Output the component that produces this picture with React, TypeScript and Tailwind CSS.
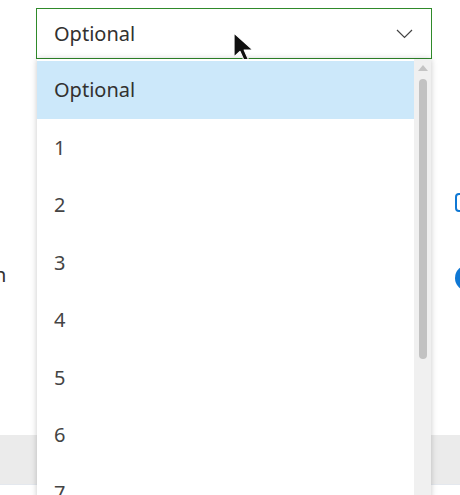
import React from "react";

const items = ["Optional", "1", "2", "3", "4", "5", "6", "7"];

function Chevron() {
  return (
    <svg width="17" height="10" viewBox="0 0 17 10" className="text-[#444]">
      <path d="M1 1l7.5 7.5L16 1" fill="none" stroke="currentColor" strokeWidth="1.2" />
    </svg>
  );
}

function Cursor() {
  return (
    <svg
      width="26"
      height="32"
      viewBox="0 0 26 32"
      className="pointer-events-none absolute left-[195px] top-[23px]"
    >
      <path
        d="M2 1v24l6-5.5 4.5 10 4-1.8-4.3-9.7H21z"
        fill="#111"
        stroke="#fff"
        strokeWidth="1.2"
        strokeLinejoin="round"
      />
    </svg>
  );
}

function DropdownList() {
  return (
    <div className="absolute left-0 top-full mt-px flex h-[440px] w-full bg-white shadow-[0_0_6px_rgba(0,0,0,0.22)]">
      <div className="flex flex-1 flex-col pt-[2px]">
        {items.map((item, i) => (
          <div
            key={item}
            className={
              i === 0
                ? "flex h-[57.5px] shrink-0 items-center bg-[#cce8fa] pl-[17px] pt-px text-[20px] text-[#323130]"
                : "flex h-[57.5px] shrink-0 items-center pl-[17px] pt-px text-[20px] text-[#444]"
            }
          >
            {item}
          </div>
        ))}
      </div>
      <div className="flex w-[17px] flex-col items-center bg-[#f0f0f0] pt-[5px]">
        <svg width="10" height="7" viewBox="0 0 10 7">
          <path d="M0 7L5 1l5 6z" fill="#c4c4c4" />
        </svg>
        <div className="mt-[8px] h-[280px] w-[8px] rounded-full bg-[#c2c2c2]" />
      </div>
    </div>
  );
}

export default function App() {
  return (
    <div className="flex h-[495px] w-[460px] flex-col overflow-hidden bg-white font-['Noto_Sans','Open_Sans',sans-serif]">
      <div className="grid h-[435px] shrink-0 grid-cols-[36px_396px_1fr]">
        <div className="overflow-hidden pt-[265px]">
          <span className="-ml-[6px] block text-[20px] leading-none text-[#323130]">n</span>
        </div>
        <div className="pt-[8px]">
          <div className="relative z-10 flex h-[51px] items-center justify-between border border-[#2f8a2a] bg-white pl-[17px] pr-[18px]">
            <span className="pt-px text-[20px] text-[#323130]">Optional</span>
            <Chevron />
            <Cursor />
            <DropdownList />
          </div>
        </div>
        <div className="flex flex-col gap-[53px] pl-[23px] pt-[193px]">
          <div className="h-[19px] w-[14px] shrink-0 rounded-[4px] border-2 border-[#0f78d4]" />
          <div className="h-[26px] w-[26px] shrink-0 rounded-full bg-[#0f78d4]" />
        </div>
      </div>
      <div className="h-[49px] shrink-0 bg-[#ebebeb]" />
      <div className="h-px shrink-0 bg-[#e4e8ee]" />
    </div>
  );
}
